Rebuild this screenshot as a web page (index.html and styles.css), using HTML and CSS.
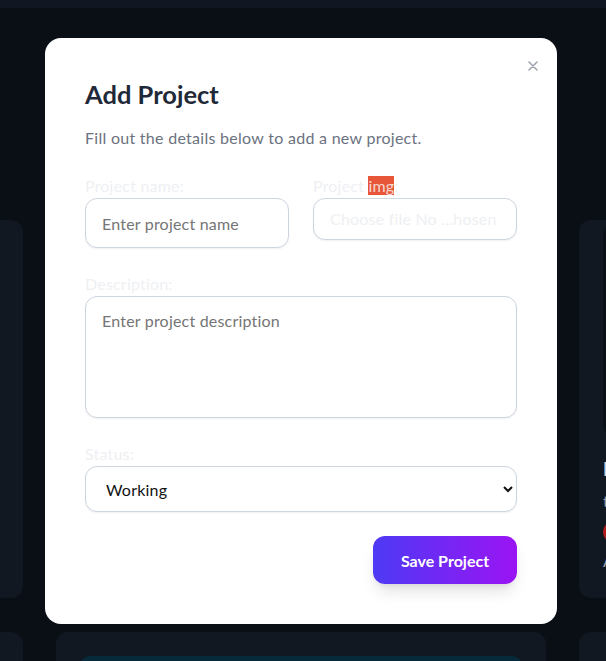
FILE: index.html
```html
<!DOCTYPE html>
<html lang="en">
<head>
<meta charset="utf-8">
<title>Add Project</title>
<link rel="stylesheet" href="styles.css">
</head>
<body>
<div class="page">
  <header class="topbar"></header>
  <main class="board">
    <div class="card"></div>
    <div class="card"></div>
    <div class="card card-right">
      <div class="thumb"></div>
      <div class="card-title">I</div>
      <div class="card-text">t</div>
      <div class="card-dot"></div>
      <div class="card-text">A</div>
    </div>
    <div class="card"></div>
    <div class="card"><div class="teal"></div></div>
    <div class="card"></div>
  </main>
</div>

<div class="overlay">
  <div class="modal">
    <button class="close" aria-label="Close">
      <svg width="10" height="10" viewBox="0 0 10 10"><path d="M1 1L9 9M9 1L1 9" stroke="#9ca3af" stroke-width="1.5" stroke-linecap="round"/></svg>
    </button>
    <h2 class="title">Add Project</h2>
    <p class="subtitle">Fill out the details below to add a new project.</p>
    <form class="form">
      <div class="row-2">
        <div class="field">
          <label class="label">Project name:</label>
          <input class="control input" type="text" placeholder="Enter project name">
        </div>
        <div class="field">
          <label class="label">Project <span class="hl">img</span>:</label>
          <div class="control file">Choose file No …hosen</div>
        </div>
      </div>
      <div class="field">
        <label class="label">Description:</label>
        <textarea class="control textarea" placeholder="Enter project description"></textarea>
      </div>
      <div class="field">
        <label class="label">Status:</label>
        <select class="control select">
          <option>Working</option>
          <option>Completed</option>
        </select>
      </div>
      <div class="actions">
        <button type="button" class="save">Save Project</button>
      </div>
    </form>
  </div>
</div>
</body>
</html>
```

FILE: styles.css
```css
* { box-sizing: border-box; }
html, body {
  margin: 0;
  height: 100%;
  overflow: hidden;
  background: #0a0e15;
  font-family: Lato, "Noto Sans", sans-serif;
}
.page { height: 100%; overflow: hidden; }
.topbar {
  height: 8px;
  background: #111722;
}
.board {
  display: grid;
  grid-template-columns: repeat(3, 490px);
  grid-auto-rows: 378px;
  column-gap: 33px;
  row-gap: 34px;
  margin-left: -467px;
  padding-top: 212px;
}
.card {
  background: #111821;
  border-radius: 12px;
  padding: 24px;
}
.card-right { padding-top: 4px; }
.thumb {
  height: 211px;
  background: #0c1118;
  border-radius: 10px;
  margin-bottom: 20px;
}
.card-title {
  color: #cfd3da;
  font-weight: 700;
  font-size: 18px;
  line-height: 28px;
}
.card-text {
  color: #9ca3af;
  font-size: 16px;
  line-height: 24px;
  margin-top: 6px;
}
.card-dot {
  width: 22px;
  height: 22px;
  border-radius: 50%;
  background: #b91c1c;
  margin-top: 8px;
}
.teal {
  height: 40px;
  background: #062a3a;
  border-radius: 10px;
}

.overlay {
  position: fixed;
  inset: 0;
  display: flex;
  justify-content: center;
  align-items: flex-start;
  padding-top: 38px;
  padding-right: 4px;
}
.modal {
  position: relative;
  width: 512px;
  background: #ffffff;
  border-radius: 16px;
  padding: 40px;
}
.close {
  position: absolute;
  top: 23px;
  right: 19px;
  width: 10px;
  height: 10px;
  padding: 0;
  border: 0;
  background: transparent;
  display: flex;
}
.title {
  margin: 0;
  font-size: 25.5px;
  line-height: 32px;
  font-weight: 700;
  color: #1f2937;
}
.subtitle {
  margin: 16px 0 24px;
  font-size: 16px;
  line-height: 24px;
  letter-spacing: 0.28px;
  color: #6b7280;
}
.form {
  display: flex;
  flex-direction: column;
  gap: 24px;
}
.row-2 {
  display: grid;
  grid-template-columns: 1fr 1fr;
  column-gap: 24px;
  align-items: start;
}
.field {
  display: flex;
  flex-direction: column;
}
.label {
  font-size: 16px;
  line-height: 24px;
  letter-spacing: 0.2px;
  color: #eef0f3;
}
.hl {
  background: #e8563a;
  color: #f6d7cf;
}
.control {
  font-family: Lato, "Noto Sans", sans-serif;
  font-size: 16px;
  line-height: 24px;
  letter-spacing: 0.2px;
  border: 1px solid #cdd5e0;
  border-radius: 12px;
  background: #ffffff;
  box-shadow: 0 1px 2px rgba(0, 0, 0, 0.06);
  padding: 12px 16px;
  color: #111111;
  width: 100%;
  outline: none;
}
.control::placeholder { color: #757575; }
.input { height: 50px; }
.file {
  height: 42px;
  padding: 8px 16px;
  color: #eef0f3;
  white-space: nowrap;
  overflow: hidden;
}
.textarea {
  height: 122px;
  resize: none;
  display: block;
}
.select {
  height: 46px;
  padding: 10px 4px 10px 16px;
  color: #111111;
}
.actions {
  display: flex;
  justify-content: flex-end;
}
.save {
  width: 144px;
  height: 48px;
  border: 0;
  border-radius: 12px;
  background: linear-gradient(90deg, #4e3af5 0%, #9b14f3 100%);
  color: #ffffff;
  font-family: Lato, "Noto Sans", sans-serif;
  font-weight: 700;
  font-size: 16px;
  box-shadow: 0 10px 15px -3px rgba(0, 0, 0, 0.12), 0 4px 6px -4px rgba(0, 0, 0, 0.1);
}
```
